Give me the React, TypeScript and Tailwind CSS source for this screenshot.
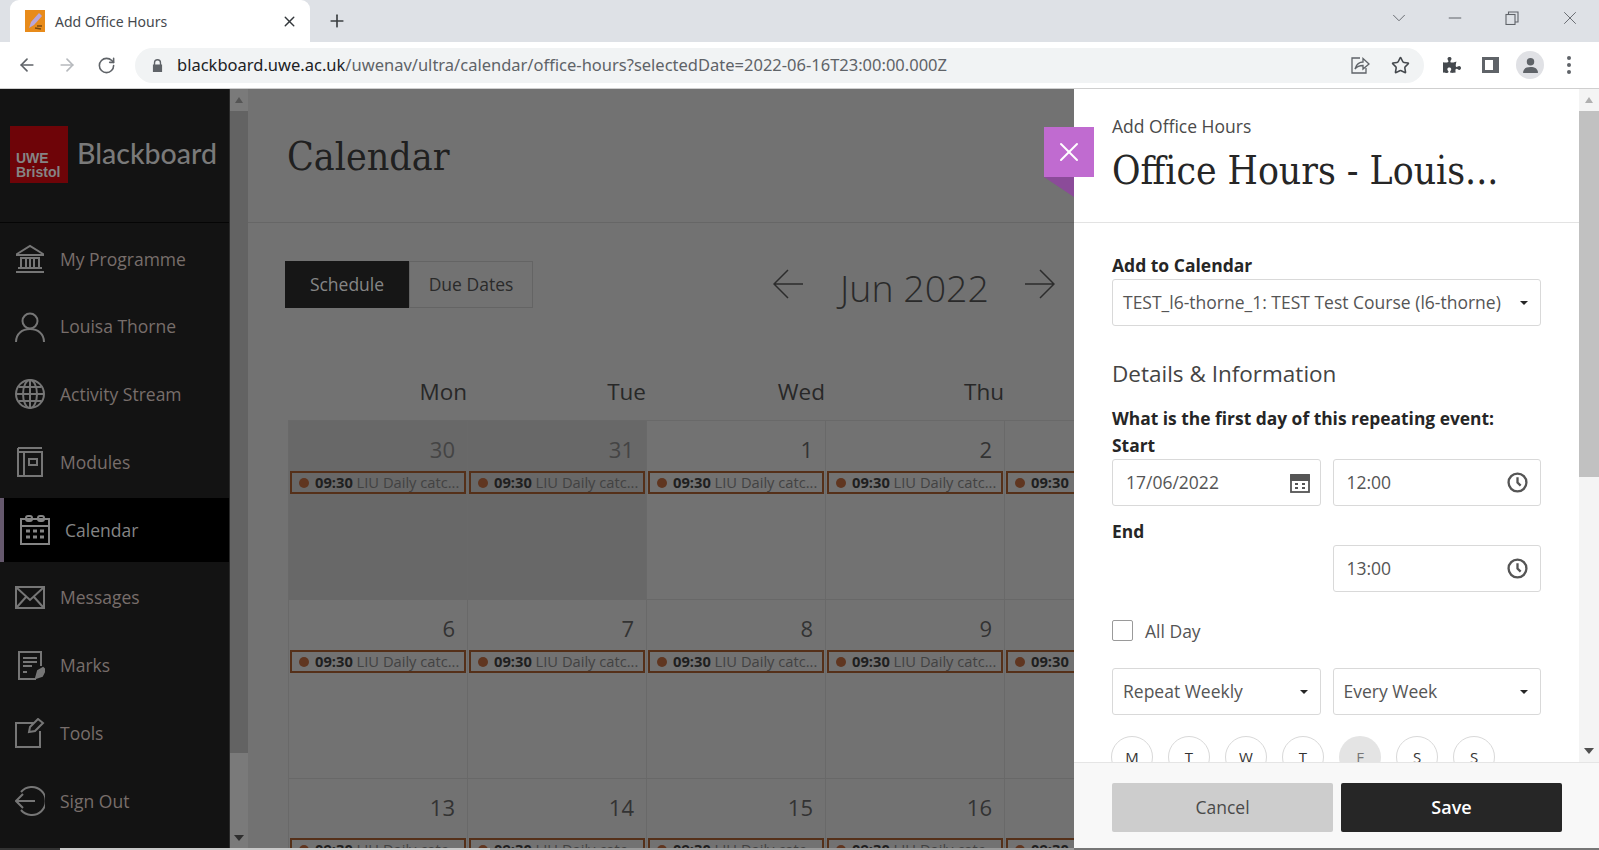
import { ArrowLeft, ArrowRight, RotateCw, Star, X, Plus, ChevronDown, Minus } from 'lucide-react';
import { FaPuzzlePiece } from 'react-icons/fa';

const svgBase = { fill: 'none', stroke: 'currentColor', strokeWidth: 2 };

const navIcons = {
  programme: (
    <svg viewBox="0 0 30 30" className="w-[30px] h-[30px]" {...svgBase}>
      <path d="M2 10 15 2l13 8v1H2z" />
      <path d="M5 14h20M6 14v9M11 14v9M15 14v9M19 14v9M24 14v9M3 24h24M1 28h28" />
    </svg>
  ),
  person: (
    <svg viewBox="0 0 30 30" className="w-[30px] h-[30px]" {...svgBase}>
      <circle cx="15" cy="9" r="7.5" />
      <path d="M1 30c0-8 6-13 14-13s14 5 14 13" />
    </svg>
  ),
  globe: (
    <svg viewBox="0 0 30 30" className="w-[30px] h-[30px]" {...svgBase}>
      <circle cx="15" cy="15" r="14" />
      <ellipse cx="15" cy="15" rx="7" ry="14" />
      <path d="M15 1v28M1 15h28M3.5 8h23M3.5 22h23" />
    </svg>
  ),
  modules: (
    <svg viewBox="0 0 30 30" className="w-[30px] h-[30px]" {...svgBase}>
      <path d="M3 1h24M3 1v28h24V5H3M9 5v24" />
      <rect x="14" y="12" width="8" height="6" />
    </svg>
  ),
  calendar: (
    <svg viewBox="0 0 30 30" className="w-[30px] h-[30px]" {...svgBase}>
      <rect x="1" y="4" width="28" height="25" />
      <path d="M1 11h28" />
      <rect x="6" y="1" width="6" height="5" rx="2" />
      <rect x="18" y="1" width="6" height="5" rx="2" />
      <path d="M6 16h4M13 16h4M20 16h4M6 22h4M13 22h4M20 22h4" strokeWidth="3" />
    </svg>
  ),
  mail: (
    <svg viewBox="0 0 30 30" className="w-[30px] h-[30px]" {...svgBase}>
      <rect x="1" y="4" width="28" height="21" />
      <path d="m2 5 13 12L28 5M2 24l9-10M28 24l-9-10" />
    </svg>
  ),
  marks: (
    <svg viewBox="0 0 30 30" className="w-[30px] h-[30px]" {...svgBase}>
      <path d="M26 16V2H4v27h17" />
      <path d="M8 8h14M8 12h14M8 16h9M8 22h4" />
      <path d="m21 28 2-7 5-3 2 2-3 6z" fill="currentColor" />
    </svg>
  ),
  tools: (
    <svg viewBox="0 0 30 30" className="w-[30px] h-[30px]" {...svgBase}>
      <path d="M19 5H1v24h24V13" />
      <path d="m14 14 1-5L23 1l5 4-8 8z" />
    </svg>
  ),
  signout: (
    <svg viewBox="0 0 30 30" className="w-[30px] h-[30px]" {...svgBase}>
      <path d="M6 6a14 14 0 1 1 0 18" />
      <path d="M1 15h19M8 8l-7 7 7 7" />
    </svg>
  ),
};

const navItems = [
  { label: 'My Programme', icon: navIcons.programme },
  { label: 'Louisa Thorne', icon: navIcons.person },
  { label: 'Activity Stream', icon: navIcons.globe },
  { label: 'Modules', icon: navIcons.modules },
  { label: 'Calendar', icon: navIcons.calendar, active: true },
  { label: 'Messages', icon: navIcons.mail },
  { label: 'Marks', icon: navIcons.marks },
  { label: 'Tools', icon: navIcons.tools },
  { label: 'Sign Out', icon: navIcons.signout },
];

// the Friday column is cut by the panel, only the start of its chips shows
const days = ['Mon', 'Tue', 'Wed', 'Thu'];
const weeks = [
  [30, 31, 1, 2],
  [6, 7, 8, 9],
  [13, 14, 15, 16],
];

function BrowserChrome() {
  return (
    <div className="shrink-0 font-['Noto_Sans',sans-serif]">
      <div className="h-[42px] bg-[#dee1e6] flex items-end pl-[10px] relative">
        <div className="w-[300px] h-[42px] bg-white rounded-t-[9px] flex items-center pl-[15px] pr-[12px]">
          <svg viewBox="0 0 20 22" className="w-[20px] h-[22px] shrink-0">
            <rect width="20" height="22" fill="#e88b1a" />
            <path d="m4 18 2-6 8-9 3 3-8 9z" fill="#b9a6d8" />
            <path d="m10 18 6 1M12 16l5 0" stroke="#7a4a10" strokeWidth="1.5" />
          </svg>
          <span className="ml-[10px] text-[14px] text-[#45494e] flex-1">Add Office Hours</span>
          <X size={17} strokeWidth={2} className="text-[#33373b]" />
        </div>
        <Plus size={20} strokeWidth={2} className="text-[#3c4043] ml-[17px] mb-[11px]" />
        <div className="flex-1 flex items-center justify-end self-start h-[36px] text-[#5f6368]">
          <ChevronDown size={22} strokeWidth={1} />
          <Minus size={20} strokeWidth={1.2} className="ml-[35px]" />
          <svg viewBox="0 0 14 14" className="w-[14px] h-[14px] ml-[40px]" fill="none" stroke="currentColor" strokeWidth="1.1">
            <rect x="1" y="3.5" width="9" height="10" />
            <path d="M3.5 3.5V1h9.5v10h-3" />
          </svg>
          <X size={22} strokeWidth={1} className="ml-[40px] mr-[18px]" />
        </div>
      </div>
      <div className="h-[47px] bg-white border-b border-[#cfcfcf] flex items-center">
        <ArrowLeft size={20} strokeWidth={2} className="ml-[17px] text-[#5f6368]" />
        <ArrowRight size={20} strokeWidth={2} className="ml-[20px] text-[#b6b9bd]" />
        <RotateCw size={19} strokeWidth={2} className="ml-[20px] text-[#5f6368]" />
        <div className="ml-[19px] w-[1289px] h-[35px] bg-[#f1f3f4] rounded-full flex items-center pl-[17px] pr-[14px]">
          <svg viewBox="0 0 12 14" className="w-[11px] h-[13px] text-[#5f6368] shrink-0" fill="currentColor">
            <path d="M2 6V4a4 4 0 0 1 8 0v2h1v8H1V6zm1.5 0h5V4a2.500 2.500 0 0 0-5 0z" />
          </svg>
          <span className="ml-[14px] text-[16.500px] text-[#5f6368] whitespace-nowrap flex-1">
            <span className="text-[#202124]">blackboard.uwe.ac.uk</span>/uwenav/ultra/calendar/office-hours?selectedDate=2022-06-16T23:00:00.000Z
          </span>
          <svg viewBox="0 0 20 20" className="w-[20px] h-[20px] text-[#5f6368] shrink-0" fill="none" stroke="currentColor" strokeWidth="1.3">
            <path d="M10 3H2v15h14v-5" />
            <path d="M5 14c1-5 5-7 8-7V3.500l6 5.500-6 5v-3.500c-3 0-6 1-8 3.500z" />
          </svg>
          <Star size={19} strokeWidth={2} className="ml-[21px] text-[#45494e] shrink-0" />
        </div>
        <FaPuzzlePiece size={18} className="ml-[19px] text-[#45494e]" />
        <div className="ml-[21px] w-[17px] h-[16px] border-[3px] border-r-[6px] border-[#5f6368]" />
        <div className="ml-[17px] w-[28px] h-[28px] rounded-full bg-[#e0e1e5] flex items-center justify-center">
          <svg viewBox="0 0 16 16" className="w-[17px] h-[17px] text-[#5f6368]" fill="currentColor">
            <circle cx="8" cy="4.500" r="3.500" />
            <path d="M1 15c0-4 3-5.500 7-5.500s7 1.500 7 5.500z" />
          </svg>
        </div>
        <div className="ml-[23px] flex flex-col gap-[3px]">
          <span className="w-[4px] h-[4px] rounded-full bg-[#5f6368]" />
          <span className="w-[4px] h-[4px] rounded-full bg-[#5f6368]" />
          <span className="w-[4px] h-[4px] rounded-full bg-[#5f6368]" />
        </div>
      </div>
    </div>
  );
}

function Sidebar() {
  return (
    <aside className="w-[229px] shrink-0 bg-[#131313] flex flex-col">
      <div className="h-[134px] shrink-0 border-b border-[#050505] pl-[10px] pt-[37px] flex items-start">
        <div className="w-[58px] h-[57px] bg-[#6e0408] flex flex-col justify-end pl-[6px] pb-[4px] text-[#858585] font-bold text-[14px] leading-[14px] font-['Liberation_Sans',sans-serif]">
          <span>UWE</span>
          <span>Bristol</span>
        </div>
        <span className="ml-[9px] mt-[9px] text-[28.500px] leading-[36px] text-[#7a7a7a] font-['Lato',sans-serif] font-medium">Blackboard</span>
      </div>
      <nav className="flex flex-col pt-[2px]">
        {navItems.map((item) =>
          item.active ? (
            <div key={item.label} className="h-[64px] bg-black flex items-center border-l-[4px] border-[#65586d] pl-[16px] text-[#858585] my-[2px]">
              {item.icon}
              <span className="ml-[15px] text-[17.500px]">{item.label}</span>
            </div>
          ) : (
            <div key={item.label} className="h-[67.700px] flex items-center pl-[15px] text-[#767676]">
              {item.icon}
              <span className="ml-[15px] text-[17.500px] text-[#786e6b]">{item.label}</span>
            </div>
          ),
        )}
      </nav>
    </aside>
  );
}

function PageScrollbar() {
  return (
    <div className="w-[19px] shrink-0 bg-[#7a7a7a] border-l border-[#2a2a2a] flex flex-col items-center">
      <div className="h-[22px] flex items-center justify-center">
        <div className="w-0 h-0 border-x-[4px] border-x-transparent border-b-[6px] border-b-[#555]" />
      </div>
      <div className="w-full h-[642px] bg-[#636363]" />
      <div className="flex-1 flex items-end pb-[7px]">
        <div className="w-0 h-0 border-x-[5px] border-x-transparent border-t-[6px] border-t-[#2e2e2e]" />
      </div>
    </div>
  );
}

function EventChip({ clipped }: { clipped?: boolean }) {
  return (
    <div
      className={`ml-[1px] h-[23px] border-2 border-[#553019] flex items-center pl-[7px] text-[14.700px] text-[#424242] whitespace-nowrap ${
        clipped ? 'border-r-0' : 'mr-[1px]'
      }`}
    >
      <span className="w-[10px] h-[10px] rounded-full bg-[#603620] shrink-0" />
      <span className="ml-[6px]">
        <b className="font-bold text-[#1f1f1f]">09:30</b>
        {!clipped && ' LIU Daily catc...'}
      </span>
    </div>
  );
}

function ArrowGlyph({ flip }: { flip?: boolean }) {
  return (
    <svg
      viewBox="0 0 30 30"
      className={`w-[30px] h-[30px] text-[#2c2c2c] ${flip ? 'rotate-180' : ''}`}
      fill="none"
      stroke="currentColor"
      strokeWidth="1.500"
    >
      <path d="M30 15H1M15 1 1 15l14 14" />
    </svg>
  );
}

function Calendar() {
  return (
    <main className="flex-1 min-w-0 bg-[#727272] overflow-hidden">
      <div className="h-[134px] border-b border-[#666666] pl-[39px] pt-[43px]">
        <h1 className="text-[39px] leading-[50px] text-[#202020] font-['DejaVu_Serif_Condensed','DejaVu_Serif',serif]">Calendar</h1>
      </div>
      <div className="pl-[37px] pt-[38px]">
        <div className="flex items-center h-[47px]">
          <div className="flex h-[47px] text-[17.500px]">
            <div className="w-[124px] bg-[#161616] text-[#868686] flex items-center justify-center">Schedule</div>
            <div className="w-[124px] border border-[#646464] text-[#2a2a2a] flex items-center justify-center">Due Dates</div>
          </div>
          <div className="ml-[240px] -mt-[2px]">
            <ArrowGlyph />
          </div>
          <span className="ml-[37px] text-[37.500px] font-light text-[#2a2a2a] whitespace-nowrap mt-[8px]">Jun 2022</span>
          <div className="ml-[36px] -mt-[2px]">
            <ArrowGlyph flip />
          </div>
        </div>
      </div>
      <div className="pl-[40px]">
        <div className="grid grid-cols-[repeat(4,179px)_70px] h-[43px] mt-[69px]">
          {days.map((d) => (
            <div key={d} className="text-right text-[22.500px] leading-[30px] text-[#282828]">{d}</div>
          ))}
        </div>
        <div className="border-t border-[#696969] border-l">
          {weeks.map((week, w) => (
            <div key={w} className="grid grid-cols-[repeat(4,179px)_70px] h-[179px] border-b border-[#686868]">
              {week.map((n, i) => {
                const past = w === 0 && i < 2;
                return (
                  <div key={n} className={`border-r border-[#696969] ${past ? 'bg-[#686868]' : ''}`}>
                    <div className={`h-[50px] pr-[12px] pt-[13px] text-right text-[22px] leading-[30px] ${past ? 'text-[#444444]' : 'text-[#333333]'}`}>{n}</div>
                    <div className={w === 2 ? 'mt-[9px]' : ''}>
                      <EventChip />
                    </div>
                  </div>
                );
              })}
              <div className="pt-[50px]">
                <div className={w === 2 ? 'mt-[9px]' : ''}>
                  <EventChip clipped />
                </div>
              </div>
            </div>
          ))}
        </div>
      </div>
    </main>
  );
}

function Caret() {
  return <div className="w-0 h-0 border-x-[4px] border-x-transparent border-t-[4px] border-t-[#262626]" />;
}

function SelectBox({ children }: { children: string }) {
  return (
    <div className="h-[47px] border border-[#d9d9d9] rounded-[3px] flex items-center justify-between pl-[10px] pr-[12px] text-[17.500px] text-[#555555] whitespace-nowrap">
      <span>{children}</span>
      <Caret />
    </div>
  );
}

function ClockIcon() {
  return (
    <svg viewBox="0 0 20 20" className="w-[21px] h-[21px] text-[#555555]" fill="none" stroke="currentColor" strokeWidth="2.200">
      <circle cx="10" cy="10" r="8.500" />
      <path d="M10 5v5l3 3" />
    </svg>
  );
}

function TimeBox({ value }: { value: string }) {
  return (
    <div className="h-[47px] border border-[#d9d9d9] rounded-[3px] flex items-center justify-between pl-[13px] pr-[12px] text-[17.500px] text-[#555555]">
      <span>{value}</span>
      <ClockIcon />
    </div>
  );
}

function OfficeHoursPanel() {
  const weekdayCircles = ['M', 'T', 'W', 'T', 'F', 'S', 'S'];
  return (
    <section className="w-[525px] shrink-0 bg-white flex flex-col relative">
      {/* close tab sticks out to the left of the panel */}
      <button className="absolute left-[-30px] top-[38px] w-[50px] h-[50px] bg-[#c06bd0] text-white flex items-center justify-center">
        <X size={32} strokeWidth={1.5} />
      </button>
      <svg viewBox="0 0 30 20" className="absolute left-[-30px] top-[88px] w-[30px] h-[20px]">
        <path d="M0 0h30v20z" fill="#8b4b99" />
      </svg>

      <div className="flex-1 min-h-0 flex">
        <div className="flex-1 min-w-0 overflow-hidden">
          <div className="h-[134px] border-b border-[#e3e3e3] pl-[38px] pt-[25px]">
            <div className="text-[17.500px] leading-[24px] text-[#4a4a4a]">Add Office Hours</div>
            <h2 className="mt-[9px] text-[38.700px] leading-[48px] text-[#262626] font-['DejaVu_Serif_Condensed','DejaVu_Serif',serif] whitespace-nowrap">Office Hours - Louis...</h2>
          </div>
          <div className="pl-[38px] pr-[38px] text-[#262626]">
            <div className="mt-[32px] text-[17.500px] leading-[20px] font-bold">Add to Calendar</div>
            <div className="mt-[4px]">
              <SelectBox>TEST_l6-thorne_1: TEST Test Course (l6-thorne)</SelectBox>
            </div>
            <h3 className="mt-[34px] text-[22.500px] leading-[28px] text-[#444444]">Details &amp; Information</h3>
            <div className="mt-[19px] text-[17.400px] leading-[22px] font-bold whitespace-nowrap">What is the first day of this repeating event:</div>
            <div className="mt-[5px] text-[17.400px] leading-[22px] font-bold">Start</div>
            <div className="mt-[3px] grid grid-cols-2 gap-x-[12px]">
              <div className="h-[47px] border border-[#d9d9d9] rounded-[3px] flex items-center justify-between pl-[13px] pr-[10px] text-[17.500px] text-[#555555]">
                <span>17/06/2022</span>
                <svg viewBox="0 0 20 20" className="w-[20px] h-[20px] text-[#555555]" fill="none" stroke="currentColor" strokeWidth="1.800">
                  <rect x="1" y="2.500" width="18" height="16.500" />
                  <path d="M1 2h18v5H1z" fill="currentColor" />
                  <path d="M5 11h3M12 11h3M5 15h3M12 15h3" strokeWidth="2.200" />
                </svg>
              </div>
              <TimeBox value="12:00" />
            </div>
            <div className="mt-[14px] text-[17.400px] leading-[22px] font-bold">End</div>
            <div className="mt-[3px] grid grid-cols-2 gap-x-[12px]">
              <div />
              <TimeBox value="13:00" />
            </div>
            <div className="mt-[28px] flex items-center">
              <div className="w-[21px] h-[21px] rounded-[2px] border border-[#9a9a9a]" />
              <span className="ml-[12px] text-[17.500px] leading-[20px] text-[#555555]">All Day</span>
            </div>
            <div className="mt-[27px] grid grid-cols-2 gap-x-[12px]">
              <SelectBox>Repeat Weekly</SelectBox>
              <SelectBox>Every Week</SelectBox>
            </div>
            <div className="mt-[21px] flex gap-[15px] -ml-[1px]">
              {weekdayCircles.map((c, i) => (
                <div
                  key={i}
                  className={`w-[42px] h-[42px] rounded-full flex items-center justify-center text-[15px] shrink-0 ${
                    c === 'F' ? 'bg-[#e4e4e4] text-[#777777]' : 'border border-[#d9d9d9] text-[#333333]'
                  }`}
                >
                  {c}
                </div>
              ))}
            </div>
          </div>
        </div>
        <div className="w-[20px] shrink-0 bg-[#f4f4f4] flex flex-col items-center">
          <div className="h-[22px] flex items-center justify-center">
            <div className="w-0 h-0 border-x-[4px] border-x-transparent border-b-[6px] border-b-[#b0b0b0]" />
          </div>
          <div className="w-full h-[366px] bg-[#c1c1c1]" />
          <div className="flex-1 flex items-end pb-[8px]">
            <div className="w-0 h-0 border-x-[5px] border-x-transparent border-t-[6px] border-t-[#505050]" />
          </div>
        </div>
      </div>

      <div className="h-[86px] shrink-0 bg-[#f8f8f8] border-t border-[#e5e5e5] pl-[38px] pt-[20px] flex gap-[8px]">
        <button className="w-[221px] h-[49px] bg-[#cdcdcd] text-[#4a4a4a] text-[17.500px] rounded-[2px]">Cancel</button>
        <button className="w-[221px] h-[49px] bg-[#262626] text-white text-[18px] font-semibold rounded-[2px]">Save</button>
      </div>
    </section>
  );
}

export default function App() {
  return (
    <div className="w-[1599px] h-[850px] overflow-hidden flex flex-col font-['Open_Sans',sans-serif]">
      <BrowserChrome />
      <div className="flex-1 min-h-0 flex">
        <Sidebar />
        <PageScrollbar />
        <Calendar />
        <OfficeHoursPanel />
      </div>
      {/* thin strip left at the bottom edge of the capture */}
      <div className="h-[2px] shrink-0 flex">
        <div className="w-[60px] bg-[#333333]" />
        <div className="w-[430px] bg-[#c8c8c8]" />
        <div className="w-[584px] bg-[#9a9a9a]" />
        <div className="flex-1 bg-[#777777]" />
      </div>
    </div>
  );
}
